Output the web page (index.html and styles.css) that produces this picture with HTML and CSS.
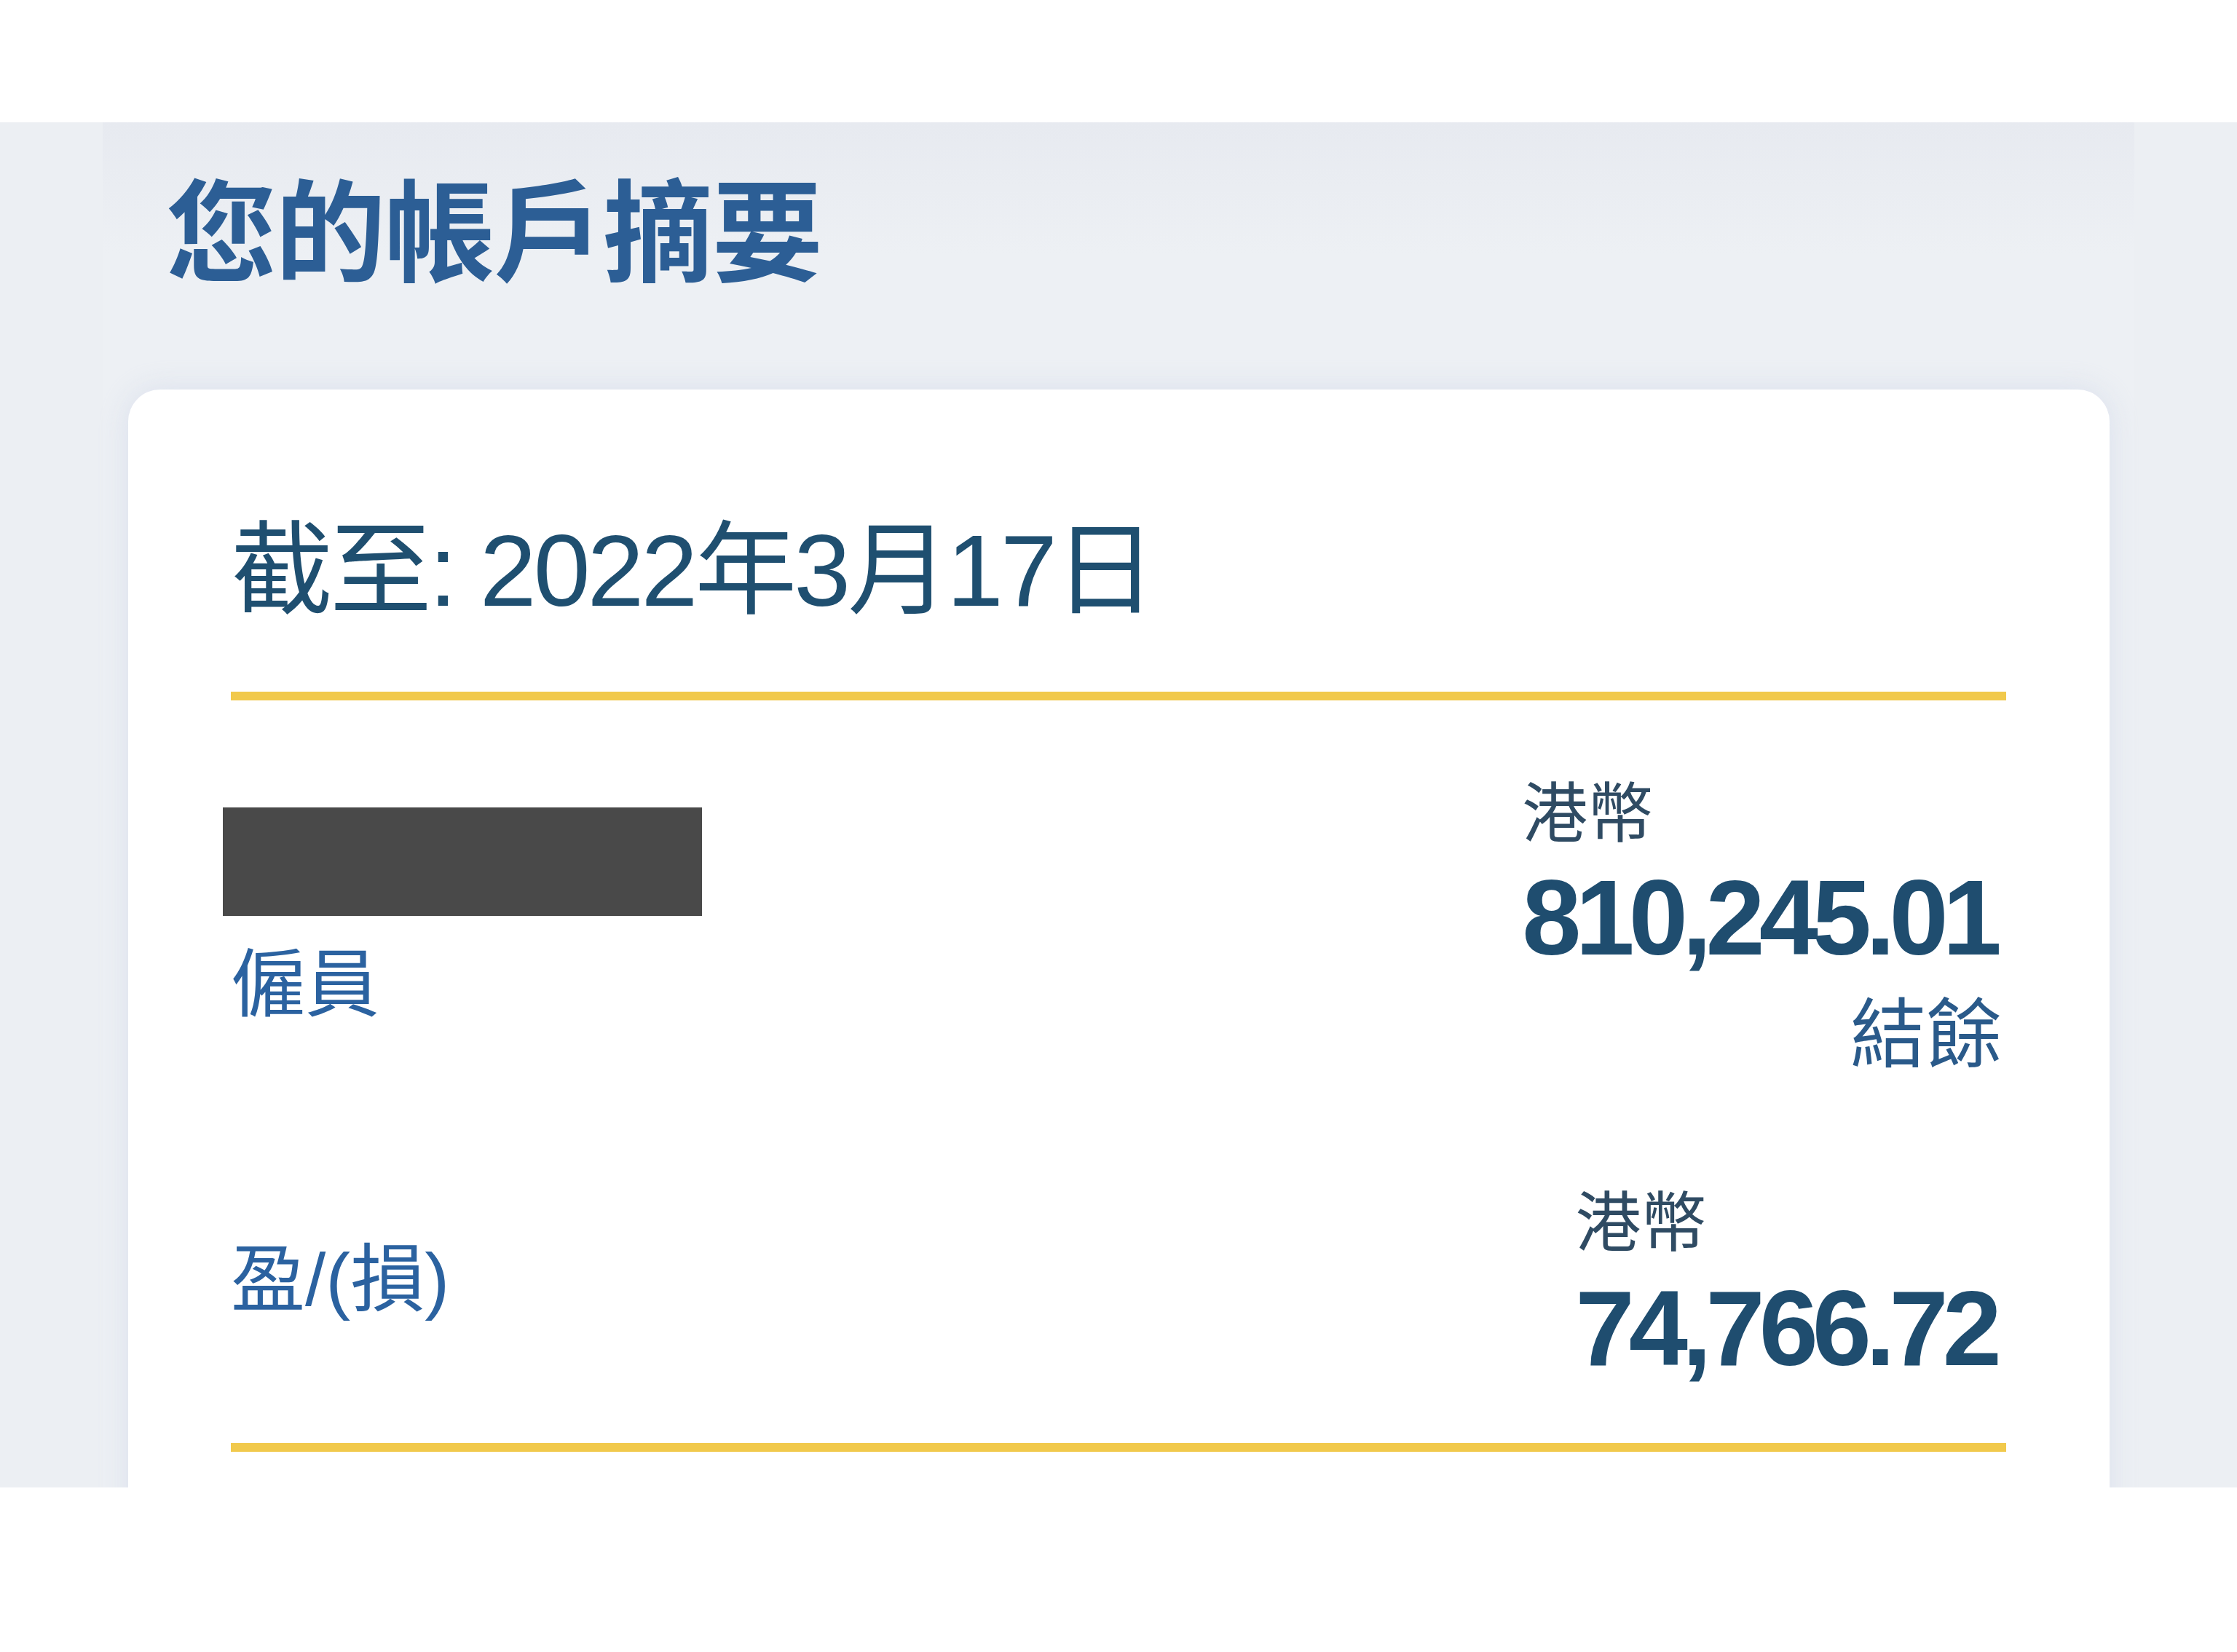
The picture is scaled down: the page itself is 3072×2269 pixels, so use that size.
FILE: index.html
```html
<!DOCTYPE html>
<html lang="zh-Hant">
<head>
    <meta charset="UTF-8">
    <meta name="viewport" content="width=device-width, initial-scale=1.0">
    <title>您的帳戶摘要</title>
    <link rel="stylesheet" href="styles.css">
</head>
<body>
    <div class="pantalla">
        <div class="panel">
            <h1 class="titulo">您的帳戶摘要</h1>
            <div class="tarjeta">
                <div class="fecha">截至: 2022年3月17日</div>
                <div class="linea"></div>

                <div class="fila fila-saldo">
                    <div class="izq">
                        <div class="tapado"></div>
                        <div class="etiqueta">僱員</div>
                    </div>
                    <div class="monto">
                        <div class="moneda">港幣</div>
                        <div class="valor">810,245.01</div>
                        <div class="nota">結餘</div>
                    </div>
                </div>

                <div class="fila fila-ganancia">
                    <div class="izq">
                        <div class="etiqueta">盈/(損)</div>
                    </div>
                    <div class="monto">
                        <div class="moneda">港幣</div>
                        <div class="valor">74,766.72</div>
                    </div>
                </div>

                <div class="linea linea-final"></div>
            </div>
        </div>
    </div>
</body>
</html>
```

FILE: styles.css
```css
body {
    margin: 0;
    background-color: #fff;
    font-family: "Liberation Sans", "Noto Sans CJK TC", sans-serif;
}

.pantalla {
    margin-top: 168px;
    height: 1875px;
    overflow: hidden;
    background-color: #eceff3;
    padding: 0 141px;
}

.panel {
    height: 100%;
    padding: 78px 34px 0 35px;
    background: linear-gradient(#e7eaf0, #edf0f4 180px);
}

.titulo {
    margin: 0;
    padding-left: 52px;
    font-size: 152px;
    line-height: 152px;
    font-weight: 700;
    letter-spacing: -2px;
    color: #2c5e95;
}

.tarjeta {
    margin-top: 137px;
    padding: 179px 142px 200px 141px;
    background-color: #fff;
    border-radius: 44px;
    box-shadow: 0 0 40px rgba(195, 205, 228, 0.45);
}

.fecha {
    font-size: 140px;
    line-height: 140px;
    letter-spacing: -4px;
    color: #1f4f70;
}

.linea {
    margin-top: 96px;
    height: 12px;
    background-color: #f1c94c;
}

.fila {
    display: flex;
    justify-content: space-between;
    align-items: flex-start;
}

.fila-saldo {
    margin-top: 111px;
}

.fila-saldo .izq {
    margin-top: 36px;
}

.fila-ganancia {
    margin-top: 161px;
}

.fila-ganancia .izq {
    margin-top: 72px;
}

.tapado {
    width: 658px;
    height: 149px;
    margin-left: -11px;
    background-color: #494949;
}

.etiqueta {
    font-size: 102px;
    line-height: 102px;
    color: #2b62a0;
}

.fila-saldo .etiqueta {
    margin-top: 44px;
}

.monto {
    display: flex;
    flex-direction: column;
    align-items: flex-start;
    margin-right: 14px;
}

.moneda {
    font-size: 90px;
    line-height: 90px;
    color: #2f4b63;
}

.valor {
    margin-top: 25px;
    font-size: 146px;
    line-height: 146px;
    font-weight: 700;
    letter-spacing: -8px;
    color: #1f4d6f;
}

.fila-ganancia .valor {
    margin-top: 27px;
}

.nota {
    align-self: flex-end;
    margin-top: 36px;
    margin-right: -8px;
    font-size: 104px;
    line-height: 104px;
    color: #2a5a8a;
}

.linea-final {
    margin-top: 84px;
}
```
